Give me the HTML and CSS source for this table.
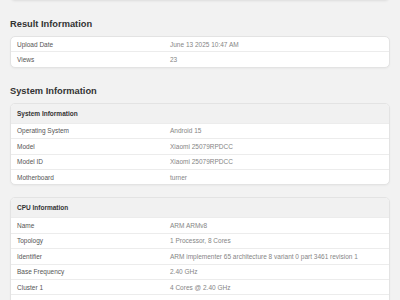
FILE: index.html
```html
<!DOCTYPE html>
<html>
<head>
<meta charset="utf-8">
<link rel="stylesheet" href="styles.css">
</head>
<body>
<div class="card prev"></div>

<h2 class="section-title">Result Information</h2>
<div class="card">
  <div class="row first"><div class="label">Upload Date</div><div class="value">June 13 2025 10:47 AM</div></div>
  <div class="row"><div class="label">Views</div><div class="value">23</div></div>
</div>

<h2 class="section-title">System Information</h2>
<div class="card">
  <div class="card-head">System Information</div>
  <div class="row"><div class="label">Operating System</div><div class="value">Android 15</div></div>
  <div class="row"><div class="label">Model</div><div class="value">Xiaomi 25079RPDCC</div></div>
  <div class="row"><div class="label">Model ID</div><div class="value">Xiaomi 25079RPDCC</div></div>
  <div class="row"><div class="label">Motherboard</div><div class="value">turner</div></div>
</div>

<div class="card spaced">
  <div class="card-head">CPU Information</div>
  <div class="row"><div class="label">Name</div><div class="value">ARM ARMv8</div></div>
  <div class="row"><div class="label">Topology</div><div class="value">1 Processor, 8 Cores</div></div>
  <div class="row"><div class="label">Identifier</div><div class="value">ARM implementer 65 architecture 8 variant 0 part 3461 revision 1</div></div>
  <div class="row"><div class="label">Base Frequency</div><div class="value">2.40 GHz</div></div>
  <div class="row"><div class="label">Cluster 1</div><div class="value">4 Cores @ 2.40 GHz</div></div>
  <div class="row"><div class="label">Cluster 2</div><div class="value">4 Cores @ 2.40 GHz</div></div>
</div>
</body>
</html>
```
FILE: styles.css
```css
html, body {
  margin: 0;
  padding: 0;
}
body {
  background: #f2f2f2;
  padding: 0 10px;
  font-family: "Liberation Sans", Arial, sans-serif;
  color: #333;
  overflow: hidden;
  height: 300px;
}
.card {
  background: #fff;
  border: 1px solid #e3e3e3;
  border-radius: 5px;
  overflow: hidden;
  box-shadow: 0 1px 2px rgba(0,0,0,0.04);
}
.card.prev {
  height: 20px;
  margin-top: -21px;
}
.card.spaced {
  margin-top: 12px;
}
.section-title {
  margin: 17px 0 6px;
  font-size: 9.3px;
  line-height: 12px;
  font-weight: bold;
  color: #333;
}
.card-head {
  height: 19px;
  background: #f1f1f1;
  font-size: 6.5px;
  font-weight: bold;
  color: #333;
  padding-left: 6px;
  display: flex;
  align-items: center;
}
.row {
  display: grid;
  grid-template-columns: 153px 1fr;
  height: 14.4px;
  align-items: center;
  border-top: 1px solid #ececec;
  font-size: 6.5px;
}
.row.first {
  border-top: none;
}
.label {
  padding-left: 6px;
  color: #555;
}
.value {
  padding-left: 6px;
  color: #858585;
  white-space: nowrap;
}
```
